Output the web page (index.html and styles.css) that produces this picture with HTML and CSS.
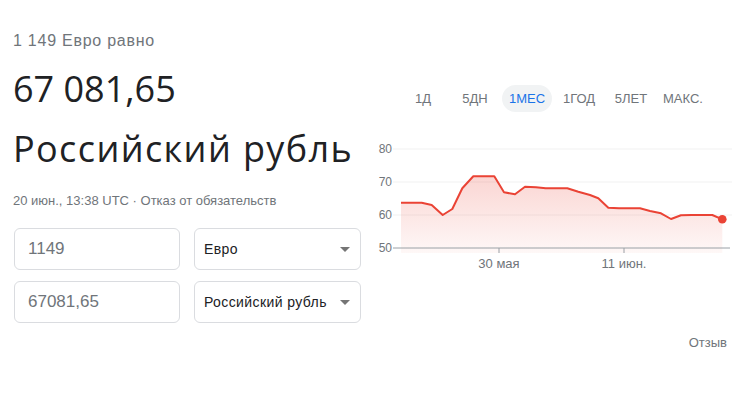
FILE: index.html
```html
<!DOCTYPE html>
<html lang="ru">
<head>
<meta charset="utf-8">
<link rel="stylesheet" href="styles.css">
</head>
<body>
<div class="page">
  <div class="left">
    <div class="lead">1 149 Евро равно</div>
    <div class="big">67 081,65</div>
    <div class="big cur">Российский рубль</div>
    <div class="meta">20 июн., 13:38 UTC · <span>Отказ от обязательств</span></div>
    <div class="conv">
      <div class="box inp">1149</div>
      <div class="box sel"><span>Евро</span><i class="arrow"></i></div>
      <div class="box inp">67081,65</div>
      <div class="box sel"><span>Российский рубль</span><i class="arrow"></i></div>
    </div>
  </div>
  <div class="right">
    <div class="tabs">
      <div class="tab">1Д</div>
      <div class="tab">5ДН</div>
      <div class="tab active"><span>1МЕС</span></div>
      <div class="tab">1ГОД</div>
      <div class="tab">5ЛЕТ</div>
      <div class="tab">МАКС.</div>
    </div>
    <svg class="chart" width="380" height="140" viewBox="0 0 380 140">
      <defs>
        <linearGradient id="fill" x1="0" y1="0" x2="0" y2="1">
          <stop offset="0" stop-color="#ea4335" stop-opacity="0.22"/>
          <stop offset="1" stop-color="#ea4335" stop-opacity="0.04"/>
        </linearGradient>
      </defs>
      <g class="grid">
        <line x1="33" y1="11" x2="372" y2="11"/>
        <line x1="33" y1="44" x2="372" y2="44"/>
        <line x1="33" y1="77" x2="372" y2="77"/>
      </g>
      <g class="ylab">
        <text x="32" y="15">80</text>
        <text x="32" y="48">70</text>
        <text x="32" y="81">60</text>
        <text x="32" y="114">50</text>
      </g>
      <polygon fill="url(#fill)" points="41,64.7 61.7,64.7 71.7,67 82.7,77 92.3,71 102.3,50.3 113.3,38.3 134.3,38.3 144,54.3 155,56.3 165,48.7 176,49.3 185.7,50.3 207.3,50.3 218.3,53.7 230,57 238.3,60.3 248.3,69.7 259,70.3 280,70.3 290,73 301,75.3 311,81 321,77.3 331.7,77 352.3,77 362.3,81.3 362.3,115 41,115"/>
      <line class="base" x1="33" y1="110" x2="370" y2="110"/>
      <line class="base" x1="139" y1="110" x2="139" y2="115"/>
      <line class="base" x1="264" y1="110" x2="264" y2="115"/>
      <polyline class="line" points="41,64.7 61.7,64.7 71.7,67 82.7,77 92.3,71 102.3,50.3 113.3,38.3 134.3,38.3 144,54.3 155,56.3 165,48.7 176,49.3 185.7,50.3 207.3,50.3 218.3,53.7 230,57 238.3,60.3 248.3,69.7 259,70.3 280,70.3 290,73 301,75.3 311,81 321,77.3 331.7,77 352.3,77 362.3,81.3"/>
      <circle cx="362.3" cy="81.3" r="4.3" fill="#ea4335"/>
      <g class="xlab">
        <text x="139" y="130">30 мая</text>
        <text x="264" y="130">11 июн.</text>
      </g>
    </svg>
    <div class="feedback">Отзыв</div>
  </div>
</div>
</body>
</html>
```
FILE: styles.css
```css
* { box-sizing: border-box; }
body {
  margin: 0;
  background: #fff;
  font-family: "Liberation Sans", Arial, sans-serif;
  color: #202124;
}
.page {
  display: grid;
  grid-template-columns: 346px 380px;
  padding-left: 13px;
  width: 740px;
  height: 400px;
}
.left { padding-top: 31px; }
.lead {
  font-size: 16px;
  line-height: 20px;
  letter-spacing: 0.75px;
  color: #70757a;
}
.big {
  font-family: "Open Sans", Roboto, sans-serif;
  font-size: 36px;
  line-height: 44px;
  color: #202124;
  margin-top: 16px;
  white-space: nowrap;
}
.big.cur {
  margin-top: 16px;
  letter-spacing: 1.4px;
}
.meta {
  margin-top: 22px;
  font-size: 13px;
  line-height: 16px;
  color: #70757a;
  white-space: nowrap;
}
.conv {
  margin-top: 19px;
  margin-left: 1px;
  display: grid;
  grid-template-columns: 166px 167px;
  column-gap: 14px;
  row-gap: 11px;
}
.box {
  height: 42px;
  border: 1px solid #dadce0;
  border-radius: 6px;
  display: flex;
  align-items: center;
}
.inp {
  padding-left: 13px;
  font-size: 17px;
  color: #70757a;
}
.sel {
  padding: 0 10px 0 9px;
  font-size: 14px;
  letter-spacing: 0.4px;
  color: #202124;
  justify-content: space-between;
}
.arrow {
  width: 0;
  height: 0;
  border-left: 5px solid transparent;
  border-right: 5px solid transparent;
  border-top: 5px solid #757575;
}
.right {
  display: flex;
  flex-direction: column;
  padding-top: 85px;
  margin-left: 1px;
}
.tabs {
  display: flex;
  padding-left: 37px;
  height: 27px;
}
.tab {
  width: 52px;
  display: flex;
  align-items: center;
  justify-content: center;
  font-size: 13px;
  color: #70757a;
}
.tab.active span {
  background: #f1f3f4;
  color: #1a73e8;
  border-radius: 14px;
  height: 27px;
  line-height: 27px;
  padding: 0 7px;
}
.chart {
  display: block;
  margin-top: 26px;
}
.grid line { stroke: #f1f1f1; stroke-width: 1; }
.base { stroke: #9aa0a6; stroke-width: 1; }
.line {
  fill: none;
  stroke: #ea4335;
  stroke-width: 2;
  stroke-linejoin: round;
}
.ylab text {
  font-size: 12px;
  fill: #70757a;
  text-anchor: end;
}
.xlab text {
  font-size: 13px;
  fill: #70757a;
  text-anchor: middle;
}
.feedback {
  margin-top: 57px;
  align-self: flex-end;
  margin-right: 12px;
  font-size: 13px;
  line-height: 16px;
  color: #70757a;
}
```
